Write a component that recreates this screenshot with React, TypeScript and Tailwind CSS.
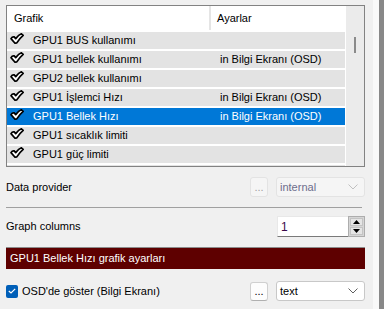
import React from 'react'

const rows = [
  { name: 'GPU1 BUS kullanımı', osd: '' },
  { name: 'GPU1 bellek kullanımı', osd: 'in Bilgi Ekranı (OSD)' },
  { name: 'GPU2 bellek kullanımı', osd: '' },
  { name: 'GPU1 İşlemci Hızı', osd: 'in Bilgi Ekranı (OSD)' },
  { name: 'GPU1 Bellek Hızı', osd: 'in Bilgi Ekranı (OSD)', selected: true },
  { name: 'GPU1 sıcaklık limiti', osd: '' },
  { name: 'GPU1 güç limiti', osd: '' },
  { name: '', osd: '' },
]

function Check() {
  return (
    <svg width="14" height="11" viewBox="0 0 14 11" className="shrink-0">
      <path
        d="M1 5.6 C1.8 4.3 3 3.6 4.2 3.9 L5.7 5.6 C7.6 3.2 9.6 1.4 11.4 0.8 L13.2 2.3 C10.8 4.3 8.6 6.9 6.8 9.9 L5 10.2 Z"
        fill="#fff"
        stroke="#000"
        strokeWidth="1.7"
        strokeLinejoin="round"
      />
    </svg>
  )
}

function Chevron({ color }: { color: string }) {
  return (
    <svg width="10" height="6" viewBox="0 0 10 6">
      <path d="M0.5 0.5 L5 5 L9.5 0.5" fill="none" stroke={color} strokeWidth="1" />
    </svg>
  )
}

export default function App() {
  return (
    <div
      className="flex w-[384px] h-[309px] overflow-hidden text-[11px] text-black"
      style={{ fontFamily: '"Liberation Sans", Arial, sans-serif' }}
    >
      <div className="flex flex-col w-[373px] bg-[#f0f0f0] pl-[6px] pr-[8px] pt-[5px]">
        {/* list */}
        <div className="flex h-[162px] border border-[#828282] bg-white overflow-hidden">
          <div className="flex flex-col flex-1 gap-[2px] overflow-hidden">
            <div className="flex shrink-0 h-[24px] items-center bg-white">
              <div className="w-[204px] pl-[7px] border-r-2 border-[#e5e5e5] h-full flex items-center">Grafik</div>
              <div className="pl-[6px]">Ayarlar</div>
            </div>
            {rows.map((r, i) => (
              <div
                key={i}
                className={`flex shrink-0 h-[17px] items-center ${r.selected ? 'bg-[#0078d7] text-white' : 'bg-[#e3e3e3]'}`}
              >
                <div className="w-[26px] pl-[3px] self-start pt-[1px]">{r.name && <Check />}</div>
                <div className="w-[187px] truncate">{r.name}</div>
                <div>{r.osd}</div>
              </div>
            ))}
          </div>
          <div className="w-[18px] ml-[1px] bg-[#ebebeb] flex justify-center pt-[31px]">
            <div className="w-[2px] h-[16px] bg-[#8a8a8a]" />
          </div>
        </div>

        {/* data provider */}
        <div className="flex items-center mt-[10px] h-[20px]">
          <div className="flex-1">Data provider</div>
          <div className="w-[18px] h-[20px] border border-[#e3e3e3] rounded-[3px] bg-[#f5f5f5] flex items-end justify-center pb-[3px] text-[#a0a0a0] leading-none">
            ...
          </div>
          <div className="ml-[8px] w-[89px] h-[20px] border border-[#e3e3e3] rounded-[3px] bg-[#f5f5f5] flex items-center justify-between pl-[3px] pr-[6px] text-[#6d6d8c]">
            <span>internal</span>
            <Chevron color="#c0c0c0" />
          </div>
        </div>

        <div className="mt-[10px] h-px w-[356px] bg-[#a0a0a0]" />

        {/* graph columns */}
        <div className="flex items-center mt-[8px] h-[21px]">
          <div className="flex-1">Graph columns</div>
          <div className="w-[71px] h-[21px] bg-white border-t border-l border-[#e8e8e8] border-b border-b-[#7a7a7a] flex items-center pl-[3px] text-[#3a0a4a] text-[12px]">
            1
          </div>
          <div className="w-[17px] h-[21px] bg-[#d6d6d6] border border-[#adadad] flex flex-col gap-[1px] p-[1px]">
            <div className="flex-1 bg-[#e5e5e5] border border-[#c4c4c4] flex items-center justify-center">
              <svg width="7" height="4" viewBox="0 0 7 4"><path d="M0 4 L3.5 0 L7 4 Z" fill="#000" /></svg>
            </div>
            <div className="flex-1 bg-[#e5e5e5] border border-[#c4c4c4] flex items-center justify-center">
              <svg width="7" height="4" viewBox="0 0 7 4"><path d="M0 0 L3.5 4 L7 0 Z" fill="#000" /></svg>
            </div>
          </div>
        </div>

        {/* title bar */}
        <div className="mt-[10px] h-[22px] border-t border-[#8c8c8c] bg-[#5e0000] text-white flex items-center pl-[4px] text-[11px]">
          GPU1 Bellek Hızı grafik ayarları
        </div>

        {/* osd row */}
        <div className="flex items-center mt-[12px] h-[20px]">
          <div className="w-[12px] h-[13px] rounded-[2px] bg-[#005fb8] flex items-center justify-center">
            <svg width="8" height="6" viewBox="0 0 8 6">
              <path d="M0.8 3 L3 5 L7.2 0.8" fill="none" stroke="#fff" strokeWidth="1.2" />
            </svg>
          </div>
          <div className="flex-1 pl-[4px] text-[11px]">OSD'de göster (Bilgi Ekranı)</div>
          <div className="w-[18px] h-[19px] border border-[#d0d0d0] border-b-[#b0b0b0] rounded-[3px] bg-[#fdfdfd] flex items-end justify-center pb-[3px] leading-none">
            ...
          </div>
          <div className="ml-[8px] w-[89px] h-[20px] border border-[#c8c8c8] rounded-[3px] bg-white flex items-center justify-between pl-[3px] pr-[6px]">
            <span>text</span>
            <Chevron color="#606060" />
          </div>
        </div>
      </div>
      <div className="w-[6px] bg-[#f9f9f9]" />
      <div className="w-[5px] bg-[#888888]" />
    </div>
  )
}
